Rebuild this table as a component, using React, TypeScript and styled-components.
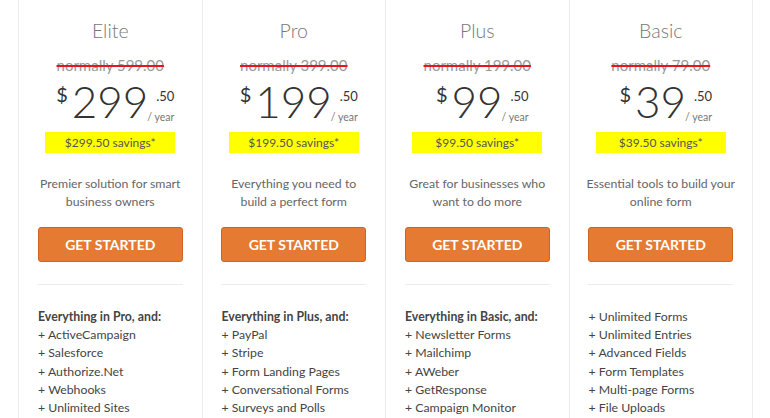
import React from "react";
import styled, { createGlobalStyle } from "styled-components";

type Plan = {
  name: string;
  normally: string;
  price: string;
  savings: string;
  blurb: string;
  lead?: string;
  features: string[];
};

const plans: Plan[] = [
  {
    name: "Elite",
    normally: "normally 599.00",
    price: "299",
    savings: "$299.50 savings*",
    blurb: "Premier solution for smart business owners",
    lead: "Everything in Pro, and:",
    features: ["ActiveCampaign", "Salesforce", "Authorize.Net", "Webhooks", "Unlimited Sites"],
  },
  {
    name: "Pro",
    normally: "normally 399.00",
    price: "199",
    savings: "$199.50 savings*",
    blurb: "Everything you need to build a perfect form",
    lead: "Everything in Plus, and:",
    features: ["PayPal", "Stripe", "Form Landing Pages", "Conversational Forms", "Surveys and Polls"],
  },
  {
    name: "Plus",
    normally: "normally 199.00",
    price: "99",
    savings: "$99.50 savings*",
    blurb: "Great for businesses who want to do more",
    lead: "Everything in Basic, and:",
    features: ["Newsletter Forms", "Mailchimp", "AWeber", "GetResponse", "Campaign Monitor"],
  },
  {
    name: "Basic",
    normally: "normally 79.00",
    price: "39",
    savings: "$39.50 savings*",
    blurb: "Essential tools to build your online form",
    features: [
      "Unlimited Forms",
      "Unlimited Entries",
      "Advanced Fields",
      "Form Templates",
      "Multi-page Forms",
      "File Uploads",
    ],
  },
];

const App: React.FC = () => {
  return (
    <>
      <GlobalStyle />
      <Page>
        <Table>
          {plans.map((plan) => (
            <Column key={plan.name}>
              <PlanName>{plan.name}</PlanName>
              <Normally>{plan.normally}</Normally>
              <PriceRow>
                <Currency>$</Currency>
                <Amount>{plan.price}</Amount>
                <Suffix>
                  <Cents>.50</Cents>
                  <Period>/ year</Period>
                </Suffix>
              </PriceRow>
              <Savings>{plan.savings}</Savings>
              <Blurb>{plan.blurb}</Blurb>
              <Button>GET STARTED</Button>
              <Divider />
              <Features>
                {plan.lead ? <Lead>{plan.lead}</Lead> : null}
                {plan.features.map((f) => (
                  <Feature key={f}>+ {f}</Feature>
                ))}
              </Features>
            </Column>
          ))}
        </Table>
      </Page>
    </>
  );
};

export default App;

const GlobalStyle = createGlobalStyle`
  body {
    margin: 0;
    background: #fff;
    font-family: Lato, "Open Sans", sans-serif;
  }
`;

const Page = styled.div`
  padding-left: 18px;
  height: 418px;
  overflow: hidden;
`;

const Table = styled.div`
  display: grid;
  grid-template-columns: repeat(4, 183.5px);
  border-right: 1px solid #ececec;
  width: max-content;
`;

const Column = styled.div`
  display: flex;
  flex-direction: column;
  align-items: center;
  padding: 19px 19px 0;
  border-left: 1px solid #ececec;
  height: 420px;
`;

const PlanName = styled.div`
  font-size: 19.5px;
  font-weight: 300;
  line-height: 24px;
  color: #777;
`;

const Normally = styled.div`
  margin-top: 12px;
  font-size: 15px;
  line-height: 20px;
  color: #999;
  text-decoration: line-through;
  text-decoration-color: #e8141b;
  text-decoration-thickness: 2px;
`;

const PriceRow = styled.div`
  display: flex;
  align-items: flex-start;
  height: 45px;
  margin-top: 4px;
  padding-left: 10px;
  color: #333;
`;

const Currency = styled.span`
  font-size: 20px;
  line-height: 1;
  margin-top: 5px;
  margin-right: 4px;
`;

const Amount = styled.span`
  font-size: 44px;
  font-weight: 300;
  line-height: 1;
`;

const Suffix = styled.div`
  display: flex;
  flex-direction: column;
  align-items: flex-end;
  margin-top: 11px;
  margin-left: -1px;
`;

const Cents = styled.span`
  font-size: 13px;
  line-height: 1;
`;

const Period = styled.span`
  font-size: 10.5px;
  line-height: 1;
  margin-top: 9px;
  color: #777;
`;

const Savings = styled.div`
  width: 130px;
  margin-top: 8px;
  background: #ffff00;
  font-size: 12px;
  line-height: 21px;
  text-align: center;
  color: #555;
`;

const Blurb = styled.p`
  margin: 22px 0 0;
  width: 150px;
  height: 36px;
  font-size: 12.3px;
  line-height: 18px;
  text-align: center;
  color: #666;
`;

const Button = styled.button`
  margin-top: 16px;
  width: 145px;
  height: 35px;
  border: 1px solid #d0631f;
  border-radius: 3px;
  background: #e57a32;
  color: #fff;
  font-family: Lato, sans-serif;
  font-weight: 700;
  font-size: 14px;
  padding: 0;
  cursor: pointer;
`;

const Divider = styled.hr`
  width: 145px;
  margin: 22px 0 0;
  border: 0;
  border-top: 1px solid #ececec;
`;

const Features = styled.ul`
  align-self: stretch;
  list-style: none;
  margin: 23px 0 0;
  padding: 0;
  font-size: 12.3px;
  line-height: 18.2px;
  color: #444;
`;

const Lead = styled.li`
  font-weight: 700;
`;

const Feature = styled.li``;
